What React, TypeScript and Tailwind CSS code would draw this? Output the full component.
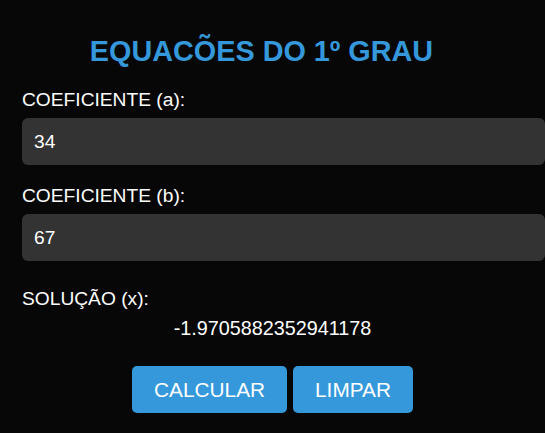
import React, { useState } from "react";

const App: React.FC = () => {
  const [a, setA] = useState("34");
  const [b, setB] = useState("67");
  const [x, setX] = useState("-1.9705882352941178");

  const calcular = () => {
    const na = parseFloat(a);
    const nb = parseFloat(b);
    if (!isNaN(na) && !isNaN(nb) && na !== 0) setX(String(-nb / na));
  };

  const limpar = () => {
    setA("");
    setB("");
    setX("");
  };

  return (
    <div className="min-h-[433px] w-[545px] overflow-hidden bg-[#070707] text-white font-['Liberation_Sans',Arial,sans-serif]">
      <div className="w-[523px] pt-[35px]">
        <h1 className="text-center text-[28.8px] leading-[33px] font-bold text-[#3498db]">
          EQUACÕES DO 1º GRAU
        </h1>

        <div className="pl-[22px] mt-[21px]">
          <label className="block text-[19.2px] leading-[22px]">COEFICIENTE (a):</label>
          <input
            value={a}
            onChange={(e) => setA(e.target.value)}
            className="mt-[7px] block w-[523px] h-[47px] rounded-[6px] bg-[#333333] px-[12px] text-[19.2px] text-white outline-none"
          />

          <label className="block mt-[20px] text-[19.2px] leading-[22px]">COEFICIENTE (b):</label>
          <input
            value={b}
            onChange={(e) => setB(e.target.value)}
            className="mt-[7px] block w-[523px] h-[47px] rounded-[6px] bg-[#333333] px-[12px] text-[19.2px] text-white outline-none"
          />

          <div className="mt-[27px] text-[19.2px] leading-[22px]">SOLUÇÃO (x):</div>
          <div className="mt-[7px] text-center text-[19.8px] leading-[22px]">{x}</div>

          <div className="mt-[27px] flex justify-center gap-[6px]">
            <button
              onClick={calcular}
              className="h-[47px] rounded-[5px] bg-[#3498db] px-[22px] text-[20.8px] text-white"
            >
              CALCULAR
            </button>
            <button
              onClick={limpar}
              className="h-[47px] rounded-[5px] bg-[#3498db] px-[22px] text-[20.8px] text-white"
            >
              LIMPAR
            </button>
          </div>
        </div>
      </div>
    </div>
  );
};

export default App;
